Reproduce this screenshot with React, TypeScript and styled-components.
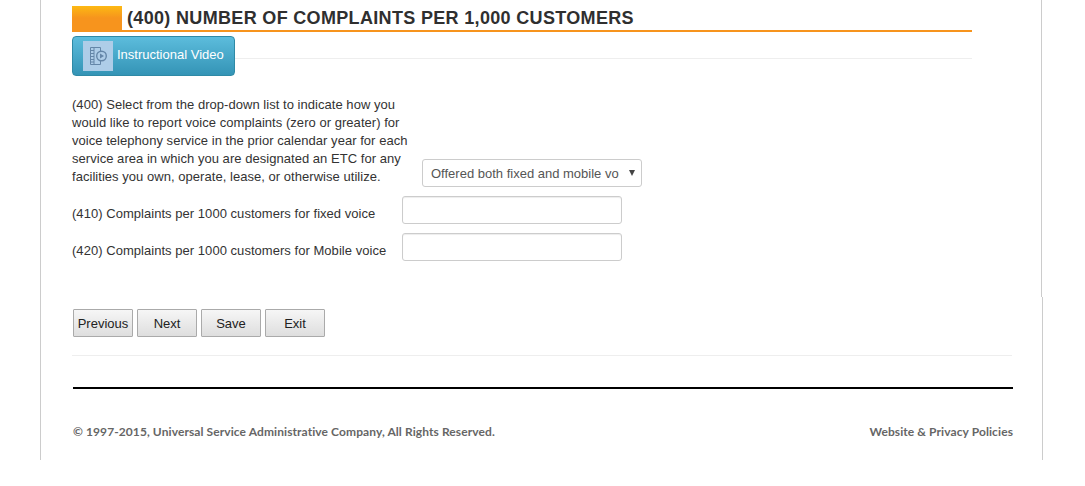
import React from 'react';
import styled, { createGlobalStyle } from 'styled-components';

const GlobalStyle = createGlobalStyle`
  html, body {
    margin: 0;
    padding: 0;
    background: #fff;
  }
  body {
    font-family: "Liberation Sans", Arial, sans-serif;
    font-size: 13px;
    color: #333;
  }
`;

const Shell = styled.div`
  margin-left: 40px;
  height: 460px;
  width: 1002px;
  border-left: 1px solid #ccc;
`;

const TopPanel = styled.section`
  box-sizing: border-box;
  width: 1001px;
  height: 297px;
  padding: 6px 0 0 31px;
  border-right: 1px solid #ccc;
`;

const BottomPanel = styled.section`
  box-sizing: border-box;
  width: 1002px;
  height: 163px;
  padding: 12px 0 0 31px;
  border-right: 1px solid #ccc;
`;

const Heading = styled.div`
  width: 900px;
  height: 24px;
  display: flex;
  border-bottom: 2px solid #f7941d;
`;

const HeadingSwatch = styled.div`
  width: 50px;
  height: 24px;
  background: linear-gradient(#fdb913, #f7941d 50%, #f7941d);
`;

const HeadingText = styled.h1`
  margin: 0 0 0 5px;
  font-size: 18px;
  line-height: 25px;
  font-weight: 700;
  letter-spacing: 0.33px;
  color: #2f2f2f;
`;

const VideoRow = styled.div`
  width: 900px;
  margin-top: 4px;
  display: flex;
  align-items: center;
`;

const VideoButton = styled.button`
  box-sizing: border-box;
  width: 163px;
  height: 40px;
  padding: 0 0 0 10px;
  display: flex;
  align-items: center;
  gap: 4px;
  border: 1px solid #2f8aa6;
  border-radius: 4px;
  background: linear-gradient(#5cbcdc, #3494b6);
  color: #fff;
  font-family: inherit;
  font-size: 13px;
`;

const VideoLabel = styled.span`
  padding-bottom: 4px;
`;

const VideoIcon = styled.span`
  width: 30px;
  height: 30px;
  display: flex;
  align-items: center;
  justify-content: center;
  background: #aecde8;
`;

const VideoRule = styled.div`
  flex: 1;
  height: 1px;
  margin-top: 4px;
  background: #eee;
`;

const QuestionRow = styled.div`
  margin-top: 20px;
  display: flex;
  align-items: flex-end;
`;

const QuestionText = styled.p`
  width: 350px;
  margin: 0 0 1px;
  padding-right: 8px;
  box-sizing: border-box;
  line-height: 18px;
  letter-spacing: 0.04px;
`;

const SelectWrap = styled.div`
  position: relative;
  width: 220px;
  height: 28px;
`;

const Select = styled.select`
  box-sizing: border-box;
  width: 100%;
  height: 100%;
  padding: 0 22px 0 8px;
  appearance: none;
  border: 1px solid #ccc;
  border-radius: 3px;
  background: #fff;
  color: #555;
  font-family: inherit;
  font-size: 13px;
`;

const SelectArrow = styled.span`
  position: absolute;
  top: 11px;
  right: 7px;
  border-left: 3px solid transparent;
  border-right: 3px solid transparent;
  border-top: 6px solid #444;
`;

const FieldRow = styled.div`
  margin-top: 9px;
  display: flex;
  align-items: center;
`;

const FieldLabel = styled.label`
  width: 330px;
  padding-top: 8px;
  line-height: 18px;
  letter-spacing: 0.04px;
`;

const TextInput = styled.input`
  box-sizing: border-box;
  width: 220px;
  height: 28px;
  border: 1px solid #ccc;
  border-radius: 3px;
  background: #fff;
  box-shadow: inset 0 1px 1px rgba(0, 0, 0, 0.075);
`;

const ButtonRow = styled.div`
  display: flex;
  gap: 4px;
  margin-left: 1px;
`;

const NavButton = styled.button`
  box-sizing: border-box;
  width: 60px;
  height: 28px;
  padding: 0;
  border: 1px solid #aaa;
  border-radius: 1px;
  background: linear-gradient(#f6f6f6, #dedede);
  color: #222;
  font-family: inherit;
  font-size: 13px;
`;

const ThinRule = styled.div`
  width: 940px;
  height: 1px;
  margin-top: 18px;
  background: #eee;
`;

const ThickRule = styled.div`
  width: 940px;
  height: 2px;
  margin: 31px 0 0 1px;
  background: #000;
`;

const Footer = styled.footer`
  width: 940px;
  margin: 35px 0 0 1px;
  display: flex;
  justify-content: space-between;
  font-family: Lato, "Open Sans", sans-serif;
  font-size: 12px;
  font-weight: 700;
  letter-spacing: 0.09px;
  line-height: 16px;
  color: #666;
`;

export default function App() {
  return (
    <>
      <GlobalStyle />
      <Shell>
        <TopPanel>
          <Heading>
            <HeadingSwatch />
            <HeadingText>(400) NUMBER OF COMPLAINTS PER 1,000 CUSTOMERS</HeadingText>
          </Heading>
          <VideoRow>
            <VideoButton>
              <VideoIcon>
                <svg width="17" height="18" viewBox="0 0 17 18" fill="none" stroke="#6486a8" strokeWidth="1">
                  <path d="M.5.5h10v4M.5.5v17h10v-4M4 .5v17" />
                  <path d="M.5 3.5H4M.5 6.5H4M.5 9.5H4M.5 12.5H4M.5 15h3.5" />
                  <circle cx="11.5" cy="9" r="4.8" strokeWidth="1.4" />
                  <path d="M10 6.5l4 2.5-4 2.5z" fill="#6486a8" stroke="none" />
                </svg>
              </VideoIcon>
              <VideoLabel>Instructional Video</VideoLabel>
            </VideoButton>
            <VideoRule />
          </VideoRow>
          <QuestionRow>
            <QuestionText>
              (400) Select from the drop-down list to indicate how you would like to report voice complaints (zero or greater) for voice telephony service in the prior calendar year for each service area in which you are designated an ETC for any facilities you own, operate, lease, or otherwise utilize.
            </QuestionText>
            <SelectWrap>
              <Select defaultValue="both">
                <option value="both">Offered both fixed and mobile voice</option>
              </Select>
              <SelectArrow />
            </SelectWrap>
          </QuestionRow>
          <FieldRow>
            <FieldLabel htmlFor="f410">(410) Complaints per 1000 customers for fixed voice</FieldLabel>
            <TextInput id="f410" />
          </FieldRow>
          <FieldRow>
            <FieldLabel htmlFor="f420">(420) Complaints per 1000 customers for Mobile voice</FieldLabel>
            <TextInput id="f420" />
          </FieldRow>
        </TopPanel>
        <BottomPanel>
          <ButtonRow>
            <NavButton>Previous</NavButton>
            <NavButton>Next</NavButton>
            <NavButton>Save</NavButton>
            <NavButton>Exit</NavButton>
          </ButtonRow>
          <ThinRule />
          <ThickRule />
          <Footer>
            <span>© 1997-2015, Universal Service Administrative Company, All Rights Reserved.</span>
            <span>Website &amp; Privacy Policies</span>
          </Footer>
        </BottomPanel>
      </Shell>
    </>
  );
}
